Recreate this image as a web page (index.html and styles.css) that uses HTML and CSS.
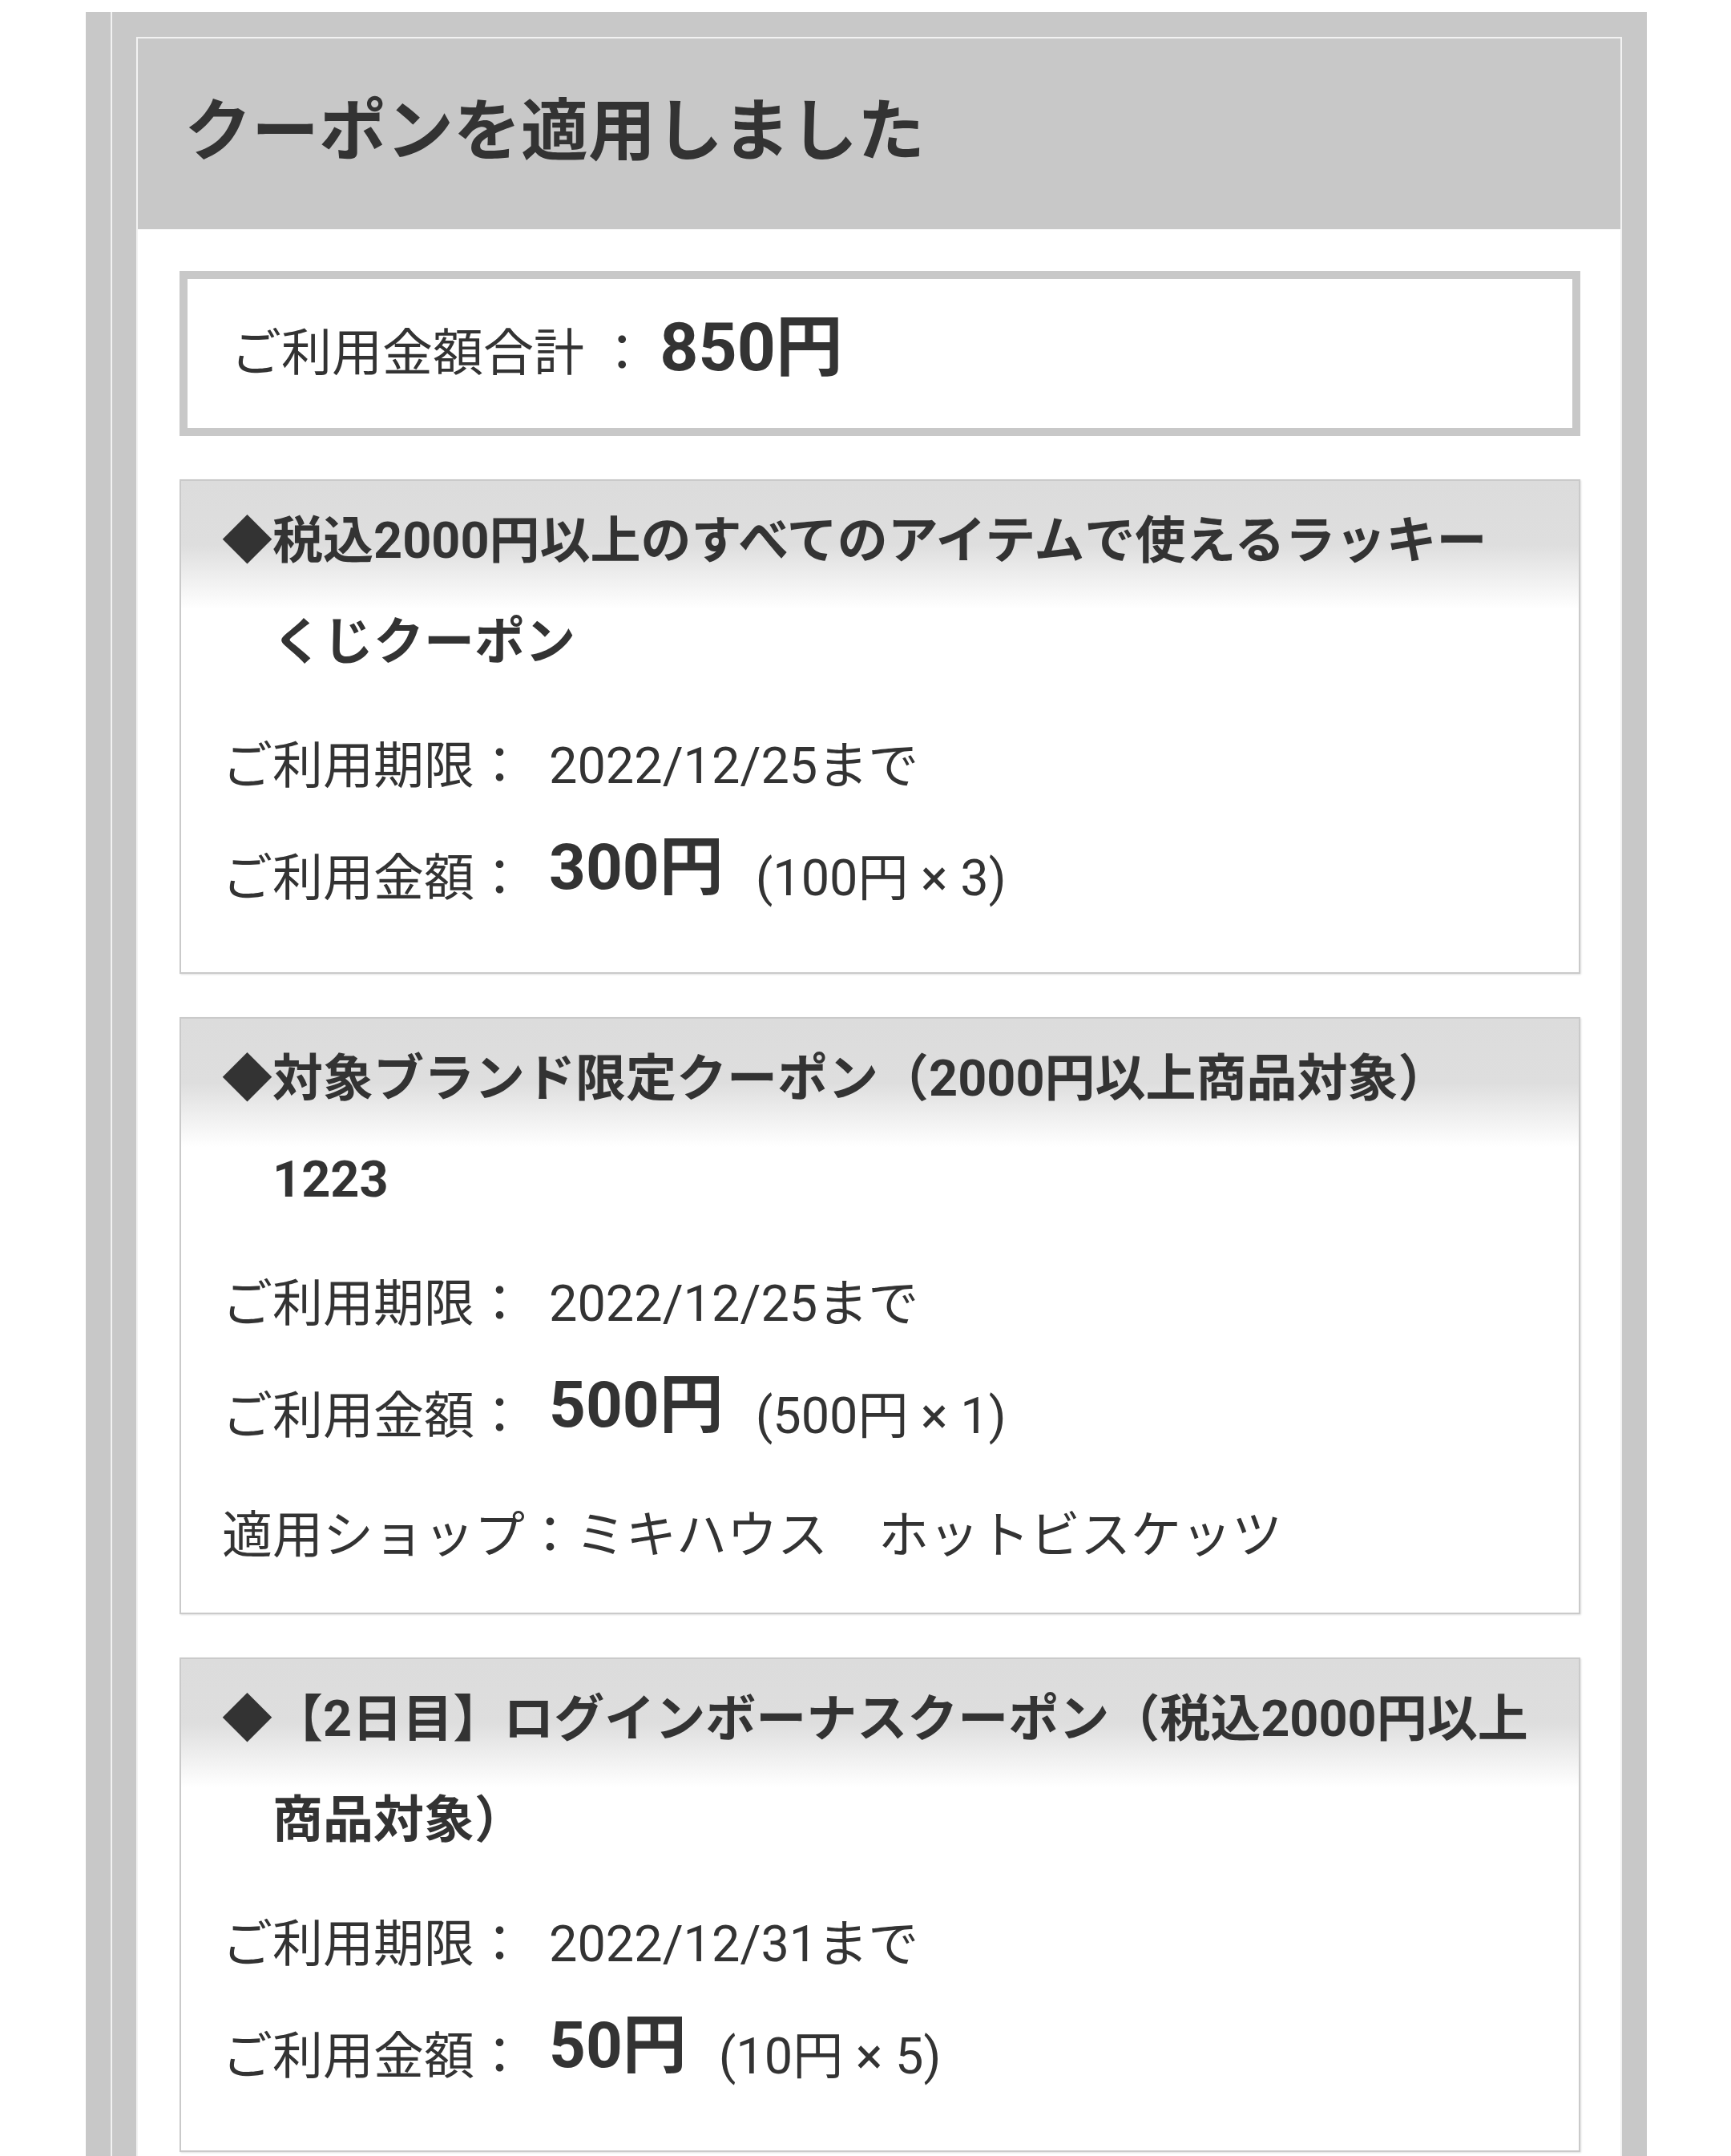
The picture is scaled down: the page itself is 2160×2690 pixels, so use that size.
FILE: index.html
```html
<!DOCTYPE html>
<html lang="ja">
<head>
<meta charset="utf-8">
<title>クーポンを適用しました</title>
<link rel="stylesheet" href="styles.css">
</head>
<body>
<div class="frame">
  <div class="frame-inner">
    <section class="panel">
      <header class="panel-head">
        <h1 class="panel-title">クーポンを適用しました</h1>
      </header>
      <div class="panel-body">
        <div class="total">
          <span class="total-label">ご利用金額合計 ： </span><span class="total-amount">850円</span>
        </div>

        <div class="card">
          <h2 class="card-title">◆税込2000円以上のすべてのアイテムで使えるラッキー<br>くじクーポン</h2>
          <div class="rows">
            <div class="row"><span class="label">ご利用期限：</span><span class="value">2022/12/25まで</span></div>
            <div class="row"><span class="label">ご利用金額：</span><span class="amount">300円</span><span class="calc">(100円 × 3)</span></div>
          </div>
        </div>

        <div class="card">
          <h2 class="card-title">◆対象ブランド限定クーポン（2000円以上商品対象）<br>1223</h2>
          <div class="rows">
            <div class="row"><span class="label">ご利用期限：</span><span class="value">2022/12/25まで</span></div>
            <div class="row"><span class="label">ご利用金額：</span><span class="amount">500円</span><span class="calc">(500円 × 1)</span></div>
          </div>
          <p class="shop">適用ショップ：ミキハウス　ホットビスケッツ</p>
        </div>

        <div class="card">
          <h2 class="card-title">◆【2日目】ログインボーナスクーポン（税込2000円以上<br>商品対象）</h2>
          <div class="rows">
            <div class="row"><span class="label">ご利用期限：</span><span class="value">2022/12/31まで</span></div>
            <div class="row"><span class="label">ご利用金額：</span><span class="amount">50円</span><span class="calc">(10円 × 5)</span></div>
          </div>
        </div>
      </div>
    </section>
  </div>
</div>
</body>
</html>
```

FILE: styles.css
```css
html, body {
  margin: 0;
  padding: 0;
  background: #ffffff;
}

body {
  font-family: Roboto, "Noto Sans CJK JP", "Noto Sans", sans-serif;
  color: #333333;
  overflow: hidden;
}

.frame {
  margin: 15px 105px 0 107px;
  background: #c8c8c8;
  padding-left: 31px;
  min-height: 2800px;
}

.frame-inner {
  border-left: 2px solid #f2f2f2;
  padding: 31px 31px 60px 30px;
  background: #c8c8c8;
  min-height: 2800px;
}

.panel {
  background: #ffffff;
  border: 2px solid #f2f2f2;
  min-height: 2760px;
}

.panel-head {
  background: #c8c8c8;
  height: 216px;
  padding-bottom: 22px;
  display: flex;
  align-items: center;
  padding-left: 58px;
}

.panel-title {
  margin: 0;
  font-size: 84px;
  font-weight: 700;
  color: #333333;
}

.panel-body {
  padding: 52px 50px 0 52px;
  display: flex;
  flex-direction: column;
  gap: 54px;
}

.total {
  border: 10px solid #c8c8c8;
  height: 172px;
  padding-bottom: 14px;
  display: flex;
  align-items: center;
  padding-left: 54px;
  font-size: 63px;
}

.total-label {
  white-space: pre;
}

.total-amount {
  font-size: 84px;
  font-weight: 700;
  line-height: 0;
  vertical-align: 4px;
}

.card {
  border: 2px solid #cacaca;
  box-shadow: 1px 1px 2px rgba(0, 0, 0, 0.12);
  background: linear-gradient(to bottom, #dcdcdc 0, #dedede 80px, #ffffff 160px);
  padding: 12px 20px 51px 51px;
}

.card-title {
  margin: 0;
  font-size: 63px;
  font-weight: 700;
  line-height: 126px;
  padding-left: 1em;
  text-indent: -1em;
  color: #333333;
}

.rows {
  margin-top: 47px;
  padding-bottom: 21px;
  display: flex;
  flex-direction: column;
  gap: 50px;
}

.row {
  height: 90px;
  line-height: 90px;
  font-size: 63px;
  white-space: nowrap;
}

.label {
  display: inline-block;
  width: 408px;
}

.amount {
  font-size: 80px;
  font-weight: 700;
  line-height: 0;
  vertical-align: 8px;
}

.calc {
  margin-left: 40px;
}

.shop {
  margin: 38px 0 0 0;
  height: 90px;
  line-height: 90px;
  font-size: 63px;
  white-space: nowrap;
}
```
